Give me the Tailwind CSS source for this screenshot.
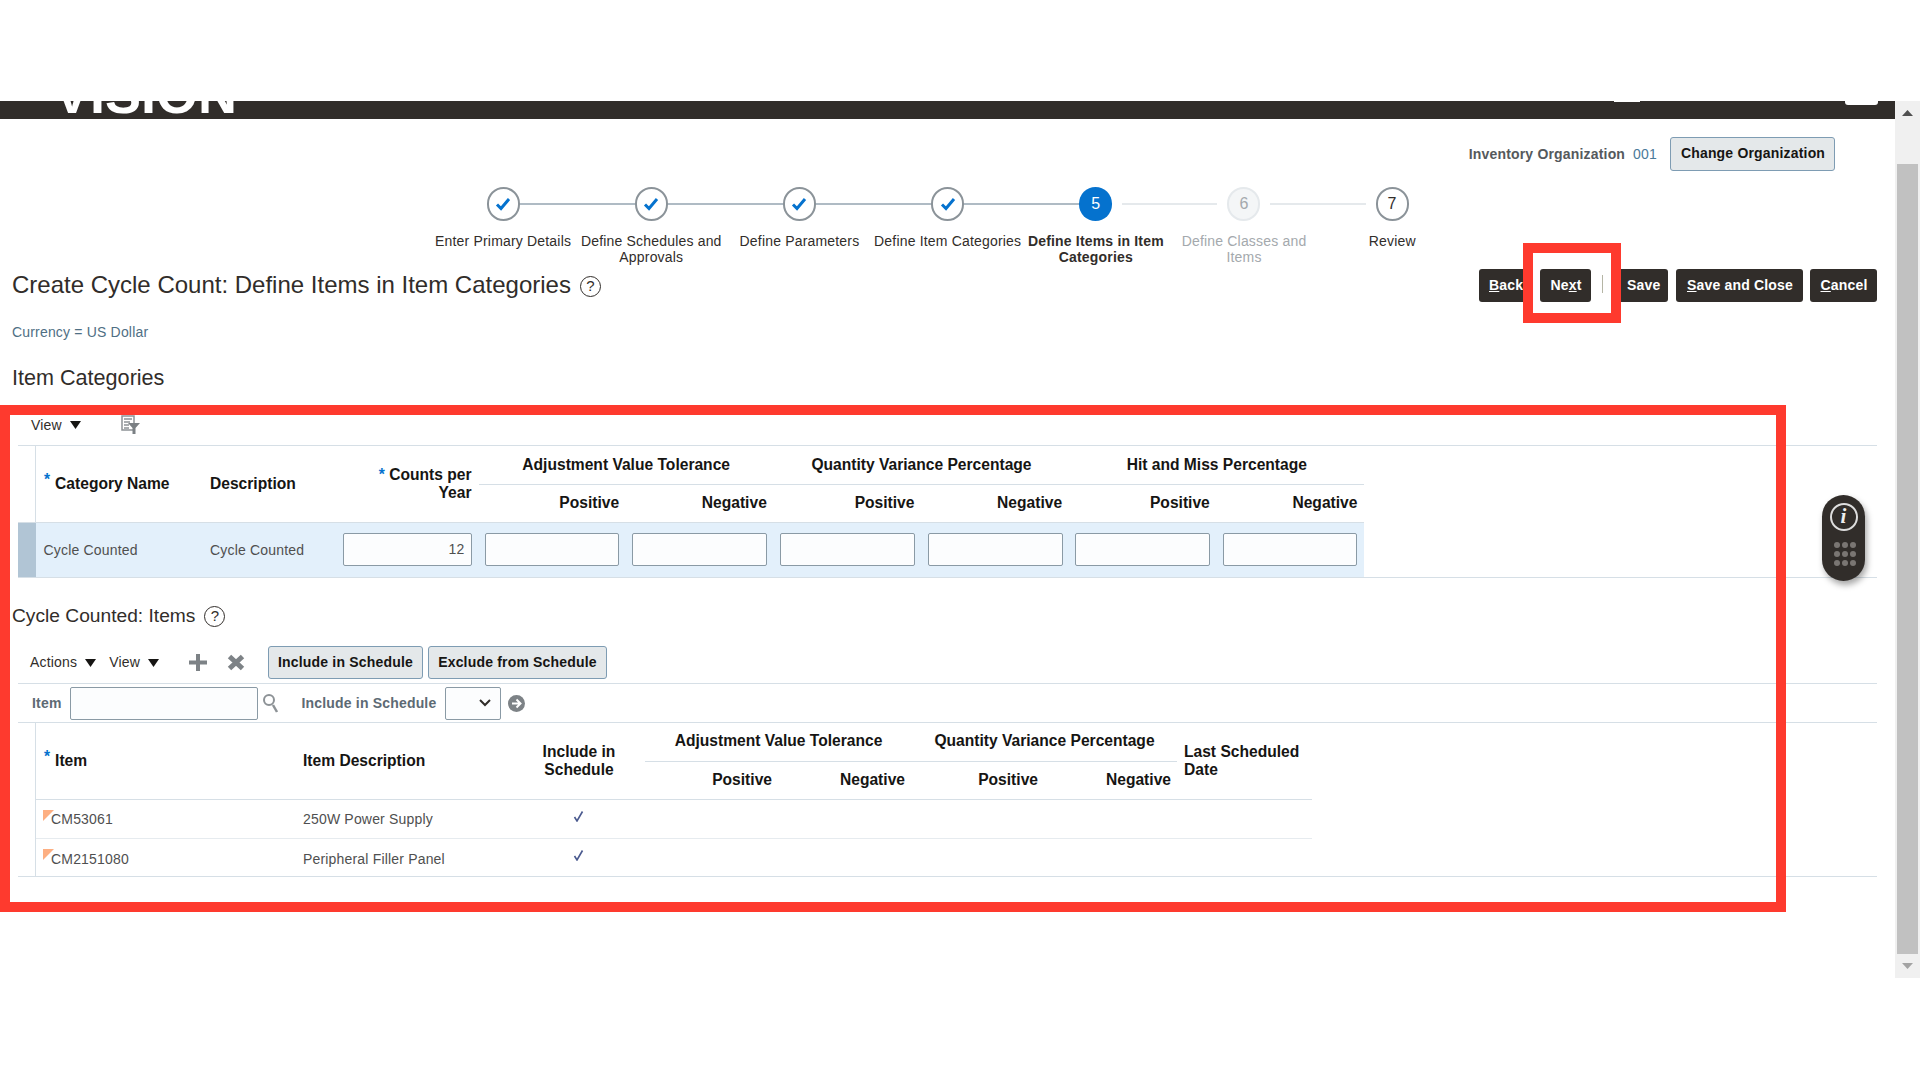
<!DOCTYPE html>
<html lang="en">
<head>
<meta charset="UTF-8">
<title>Create Cycle Count</title>
<script src="https://cdn.jsdelivr.net/npm/@tailwindcss/browser@4"></script>
</head>
<body class="bg-white">
<div class="relative w-[1920px] h-[1080px] overflow-hidden font-['Liberation_Sans',Arial,sans-serif] text-[14px] tracking-[0.18px] text-[#312d2a]">
    <div class="h-[101px]"></div>
    <div class="flex h-[877px]">
        <div class="w-[1895px]">
            <!-- brand bar, cut off at the top -->
            <div class="relative h-[18px] bg-[#312d2a] overflow-hidden">
                <div class="absolute left-[54px] -bottom-[2px] text-[54px] leading-[54px] tracking-normal font-bold text-white">VISION</div>
                <div class="absolute left-[1614px] top-0 w-[26px] h-[1px] bg-white"></div>
                <div class="absolute left-[1845px] top-0 w-[33px] h-[4px] bg-white rounded-b-[3px]"></div>
            </div>

            <!-- organization -->
            <div class="flex justify-end items-center h-[34px] mt-[18px] pr-[60px]">
                <span class="font-bold text-[#55595c]">Inventory Organization</span>
                <span class="ml-[8px] text-[#4a7a99]">001</span>
                <button class="ml-[13px] h-[34px] w-[165px] pl-[1px] rounded-[3px] border border-[#7e9cb3] bg-[#e4e8ea] font-bold text-[#161513] pb-[1px]">Change Organization</button>
            </div>

            <!-- train -->
            <div class="flex items-center h-[34px] mt-[16px] pl-[486.5px]">
                <div class="flex items-center justify-center w-[33px] h-[34px] rounded-full border-2 border-[#8b9399] bg-white">
                    <svg width="16" height="14" viewBox="0 0 16 14"><path d="M2 7.500l4 4L14 2" fill="none" stroke="#0572ce" stroke-width="3"/></svg>
                </div>
                <div class="w-[115.2px] h-[2px] bg-[#afbbc4]"></div>
                <div class="flex items-center justify-center w-[33px] h-[34px] rounded-full border-2 border-[#8b9399] bg-white">
                    <svg width="16" height="14" viewBox="0 0 16 14"><path d="M2 7.500l4 4L14 2" fill="none" stroke="#0572ce" stroke-width="3"/></svg>
                </div>
                <div class="w-[115.2px] h-[2px] bg-[#afbbc4]"></div>
                <div class="flex items-center justify-center w-[33px] h-[34px] rounded-full border-2 border-[#8b9399] bg-white">
                    <svg width="16" height="14" viewBox="0 0 16 14"><path d="M2 7.500l4 4L14 2" fill="none" stroke="#0572ce" stroke-width="3"/></svg>
                </div>
                <div class="w-[115.2px] h-[2px] bg-[#afbbc4]"></div>
                <div class="flex items-center justify-center w-[33px] h-[34px] rounded-full border-2 border-[#8b9399] bg-white">
                    <svg width="16" height="14" viewBox="0 0 16 14"><path d="M2 7.500l4 4L14 2" fill="none" stroke="#0572ce" stroke-width="3"/></svg>
                </div>
                <div class="w-[115.2px] h-[2px] bg-[#afbbc4]"></div>
                <div class="flex items-center justify-center w-[33px] h-[34px] rounded-full bg-[#0572ce] text-white text-[16px]">5</div>
                <div class="w-[95.2px] h-[2px] mx-[10px] bg-[#e5e9ec]"></div>
                <div class="flex items-center justify-center w-[33px] h-[34px] rounded-full border-2 border-[#e5e9ec] bg-[#f4f6f7] text-[#a4a9ad] text-[16px]">6</div>
                <div class="w-[95.2px] h-[2px] mx-[10px] bg-[#e5e9ec]"></div>
                <div class="flex items-center justify-center w-[33px] h-[34px] rounded-full border-2 border-[#8b9399] bg-white text-[16px]">7</div>
            </div>
            <div class="flex mt-[12px] pl-[429px] h-[32px] text-center leading-[16px]">
                <div class="w-[148.2px]">Enter Primary Details</div>
                <div class="w-[148.2px]">Define Schedules and<br>Approvals</div>
                <div class="w-[148.2px]">Define Parameters</div>
                <div class="w-[148.2px] whitespace-nowrap">Define Item Categories</div>
                <div class="w-[148.2px] font-bold">Define Items in Item<br>Categories</div>
                <div class="w-[148.2px] text-[#a4a9ad]">Define Classes and<br>Items</div>
                <div class="w-[148.2px]">Review</div>
            </div>

            <!-- title and page buttons -->
            <div class="flex items-center justify-between h-[33px] mt-[4px] pl-[12px] pr-[18px]">
                <div class="flex items-center">
                    <h1 class="text-[24px] leading-[33px] tracking-normal pb-[1px] -mt-[1px]">Create Cycle Count: Define Items in Item Categories</h1>
                    <span class="flex items-center justify-center ml-[9px] mt-[1px] w-[21px] h-[21px] rounded-full border-[1.5px] border-[#312d2a] text-[15px]">?</span>
                </div>
                <div class="flex items-center font-bold text-white">
                    <button class="w-[56px] h-[33px] pl-[10px] text-left rounded-[3px] bg-[#312d2a]"><u>B</u>ack</button>
                    <button class="relative z-20 ml-[5px] w-[51px] h-[33px] pl-[1px] rounded-[3px] bg-[#312d2a]">Ne<u>x</u>t</button>
                    <span class="relative z-20 ml-[11px] w-[1px] h-[18px] bg-[#b5b5a5] -mt-[4px]"></span>
                    <button class="ml-[14px] w-[51px] h-[33px] pl-[10px] text-left rounded-[3px] bg-[#312d2a]">Save</button>
                    <button class="ml-[8px] w-[127px] h-[33px] pl-[1px] rounded-[3px] bg-[#312d2a]"><u>S</u>ave and Close</button>
                    <button class="ml-[7px] w-[67px] h-[33px] pl-[1px] rounded-[3px] bg-[#312d2a]"><u>C</u>ancel</button>
                </div>
            </div>

            <div class="mt-[20px] pl-[12px] h-[20px] leading-[20px] text-[#4f6f84]">Currency = US Dollar</div>
            <h2 class="mt-[22px] pl-[12px] h-[28px] leading-[28px] text-[21.6px] tracking-normal">Item Categories</h2>

            <!-- item categories table -->
            <div class="ml-[18px] mr-[18px] mt-[23px]">
                <div class="flex items-center h-[31px] border-b border-[#d6dfe6]">
                    <span class="ml-[13px] -mt-[10px]">View</span>
                    <svg class="ml-[8px] -mt-[10px]" width="11" height="8" viewBox="0 0 11 8"><path d="M0 0h11L5.500 8z" fill="#161513"/></svg>
                    <svg class="ml-[40px] -mt-[12px]" width="20" height="19" viewBox="0 0 20 19">
                        <path d="M1 1h12v14H1z" fill="none" stroke="#8d9296" stroke-width="1.500"/>
                        <path d="M3 4h8M3 7h6M3 10h5M3 13h5" stroke="#8d9296" stroke-width="1.500"/>
                        <path d="M7 8h12l-4.500 5v6h-3v-6z" fill="#7b8084"/>
                    </svg>
                </div>
                <div class="grid grid-cols-[18px_167px_134px_141.500px_repeat(6,147.670px)] grid-rows-[39px_38px_54px] border-b border-[#d6dfe6]">
                    <div class="row-span-2 border-r border-[#d6dfe6] border-b"></div>
                    <div class="row-span-2 flex items-center pl-[8px] font-bold text-[15.6px] tracking-normal text-[#161513] border-b border-[#d6dfe6]"><span class="text-[#0572ce] mr-[5px] -mt-[8px]">*</span>Category Name</div>
                    <div class="row-span-2 flex items-center pl-[7px] font-bold text-[15.6px] tracking-normal text-[#161513] border-b border-[#d6dfe6]">Description</div>
                    <div class="row-span-2 flex items-center justify-end pr-[7px] pb-[1px] text-right font-bold text-[15.6px] tracking-normal leading-[18px] text-[#161513] border-b border-[#d6dfe6]"><span><span class="text-[#0572ce] font-bold align-top">*</span> Counts per<br>Year</span></div>
                    <div class="col-span-2 flex items-center justify-center font-bold text-[15.6px] tracking-normal text-[#161513] border-b border-[#d6dfe6]">Adjustment Value Tolerance</div>
                    <div class="col-span-2 flex items-center justify-center font-bold text-[15.6px] tracking-normal text-[#161513] border-b border-[#d6dfe6]">Quantity Variance Percentage</div>
                    <div class="col-span-2 flex items-center justify-center font-bold text-[15.6px] tracking-normal text-[#161513] border-b border-[#d6dfe6]">Hit and Miss Percentage</div>
                    <div class="flex items-center justify-end pr-[7px] pb-[1px] font-bold text-[15.6px] tracking-normal text-[#161513] border-b border-[#d6dfe6]">Positive</div>
                    <div class="flex items-center justify-end pr-[7px] pb-[1px] font-bold text-[15.6px] tracking-normal text-[#161513] border-b border-[#d6dfe6]">Negative</div>
                    <div class="flex items-center justify-end pr-[7px] pb-[1px] font-bold text-[15.6px] tracking-normal text-[#161513] border-b border-[#d6dfe6]">Positive</div>
                    <div class="flex items-center justify-end pr-[7px] pb-[1px] font-bold text-[15.6px] tracking-normal text-[#161513] border-b border-[#d6dfe6]">Negative</div>
                    <div class="flex items-center justify-end pr-[7px] pb-[1px] font-bold text-[15.6px] tracking-normal text-[#161513] border-b border-[#d6dfe6]">Positive</div>
                    <div class="flex items-center justify-end pr-[7px] pb-[1px] font-bold text-[15.6px] tracking-normal text-[#161513] border-b border-[#d6dfe6]">Negative</div>

                    <div class="bg-[#b1c5d5]"></div>
                    <div class="flex items-center pl-[7.500px] bg-[#e3f0fb] text-[#4f4f4f]">Cycle Counted</div>
                    <div class="flex items-center pl-[7px] bg-[#e3f0fb] text-[#4f4f4f]">Cycle Counted</div>
                    <div class="flex items-center pl-[6px] pr-[7px] pb-[1px] bg-[#e3f0fb]"><div class="w-full h-[33px] rounded-[2px] border border-[#8a9aa5] bg-[#fcfdfe] text-right pr-[6px] leading-[31px] text-[#4f4f4f]">12</div></div>
                    <div class="flex items-center pl-[6px] pr-[7px] pb-[1px] bg-[#e3f0fb]"><input class="w-full h-[33px] rounded-[2px] border border-[#8a9aa5] bg-[#fcfdfe]"></div>
                    <div class="flex items-center pl-[6px] pr-[7px] pb-[1px] bg-[#e3f0fb]"><input class="w-full h-[33px] rounded-[2px] border border-[#8a9aa5] bg-[#fcfdfe]"></div>
                    <div class="flex items-center pl-[6.500px] pr-[6.500px] pb-[1px] bg-[#e3f0fb]"><input class="w-full h-[33px] rounded-[2px] border border-[#8a9aa5] bg-[#fcfdfe]"></div>
                    <div class="flex items-center pl-[6.500px] pr-[6.500px] pb-[1px] bg-[#e3f0fb]"><input class="w-full h-[33px] rounded-[2px] border border-[#8a9aa5] bg-[#fcfdfe]"></div>
                    <div class="flex items-center pl-[6px] pr-[7px] pb-[1px] bg-[#e3f0fb]"><input class="w-full h-[33px] rounded-[2px] border border-[#8a9aa5] bg-[#fcfdfe]"></div>
                    <div class="flex items-center pl-[6px] pr-[7px] pb-[1px] bg-[#e3f0fb]"><input class="w-full h-[33px] rounded-[2px] border border-[#8a9aa5] bg-[#fcfdfe]"></div>
                </div>
            </div>

            <!-- items -->
            <div class="flex items-center mt-[26px] pl-[12px] h-[24px]">
                <h2 class="text-[19.2px] tracking-normal">Cycle Counted: Items</h2>
                <span class="flex items-center justify-center ml-[9px] w-[21px] h-[21px] rounded-full border-[1.5px] border-[#312d2a] text-[15px]">?</span>
            </div>
            <div class="ml-[18px] mr-[18px] mt-[18px]">
                <div class="flex items-start h-[38px] border-b border-[#d6dfe6]">
                    <div class="flex items-center h-[33px]">
                        <span class="ml-[12px]">Actions</span>
                        <svg class="ml-[8px]" width="11" height="8" viewBox="0 0 11 8"><path d="M0 0h11L5.500 8z" fill="#161513"/></svg>
                        <span class="ml-[13px]">View</span>
                        <svg class="ml-[8px]" width="11" height="8" viewBox="0 0 11 8"><path d="M0 0h11L5.500 8z" fill="#161513"/></svg>
                        <svg class="ml-[30px]" width="18" height="17" viewBox="0 0 18 17"><path d="M7 0h4v6.500h7v4h-7V17H7v-6.500H0v-4h7z" fill="#7d8286"/></svg>
                        <svg class="ml-[20px]" width="18" height="17" viewBox="0 0 18 17"><path d="M2.500 2.500l13 12M15.500 2.500l-13 12" fill="none" stroke="#7d8286" stroke-width="5"/></svg>
                        <button class="ml-[23px] w-[155px] h-[33px] rounded-[3px] border border-[#7e9cb3] bg-[#e4e8ea] font-bold text-[#161513]">Include in Schedule</button>
                        <button class="ml-[5px] w-[179px] h-[33px] rounded-[3px] border border-[#7e9cb3] bg-[#e4e8ea] font-bold text-[#161513]">Exclude from Schedule</button>
                    </div>
                </div>
                <div class="flex items-center h-[39px] border-b border-[#d6dfe6]">
                    <span class="ml-[14px] font-bold text-[#5d6a74]">Item</span>
                    <input class="ml-[8px] w-[188px] h-[33px] rounded-[2px] border border-[#8a9aa5] bg-[#fcfdfe]">
                    <svg class="ml-[5px]" width="16" height="20" viewBox="0 0 16 20"><circle cx="6" cy="7" r="5" fill="none" stroke="#8d9296" stroke-width="2"/><path d="M10 12l4 7" stroke="#8d9296" stroke-width="2.500"/></svg>
                    <span class="ml-[23px] font-bold text-[#5d6a74]">Include in Schedule</span>
                    <div class="flex items-center justify-end ml-[9px] w-[56px] h-[33px] pr-[9px] rounded-[2px] border border-[#8a9aa5] bg-[#fcfdfe]">
                        <svg width="12" height="8" viewBox="0 0 12 8"><path d="M1 1l5 5 5-5" fill="none" stroke="#312d2a" stroke-width="2"/></svg>
                    </div>
                    <svg class="ml-[7px]" width="17" height="17" viewBox="0 0 17 17"><circle cx="8.500" cy="8.500" r="8.500" fill="#7d8286"/><path d="M4 8.500h8M8.500 4.500l4 4-4 4" fill="none" stroke="#fff" stroke-width="2"/></svg>
                </div>
                <div class="border-b border-[#d6dfe6]">
                    <div class="grid grid-cols-[18px_259px_216px_134px_133px_134px_133px_132px_135px] grid-rows-[39px_38px_39px_37px] w-[1294px]">
                        <div class="row-span-4 border-r border-[#d6dfe6]"></div>
                        <div class="row-span-2 flex items-center pl-[8px] font-bold text-[15.6px] tracking-normal text-[#161513] border-b border-[#d6dfe6]"><span class="text-[#0572ce] mr-[5px] -mt-[8px]">*</span>Item</div>
                        <div class="row-span-2 flex items-center pl-[8px] font-bold text-[15.6px] tracking-normal text-[#161513] border-b border-[#d6dfe6]">Item Description</div>
                        <div class="row-span-2 flex items-center justify-center pl-[2px] text-center font-bold text-[15.6px] tracking-normal leading-[18px] text-[#161513] border-b border-[#d6dfe6]">Include in<br>Schedule</div>
                        <div class="col-span-2 flex items-center justify-center pb-[2px] font-bold text-[15.6px] tracking-normal text-[#161513] border-b border-[#d6dfe6]">Adjustment Value Tolerance</div>
                        <div class="col-span-2 flex items-center justify-center pb-[2px] font-bold text-[15.6px] tracking-normal text-[#161513] border-b border-[#d6dfe6]">Quantity Variance Percentage</div>
                        <div class="row-span-2 flex items-center pl-[7px] font-bold text-[15.6px] tracking-normal leading-[18px] text-[#161513] border-b border-[#d6dfe6]">Last Scheduled<br>Date</div>
                        <div class="flex items-center justify-end pr-[6px] pb-[2px] font-bold text-[15.6px] tracking-normal text-[#161513] border-b border-[#d6dfe6]">Positive</div>
                        <div class="flex items-center justify-end pr-[7px] pb-[2px] font-bold text-[15.6px] tracking-normal text-[#161513] border-b border-[#d6dfe6]">Negative</div>
                        <div class="flex items-center justify-end pr-[7px] pb-[2px] font-bold text-[15.6px] tracking-normal text-[#161513] border-b border-[#d6dfe6]">Positive</div>
                        <div class="flex items-center justify-end pr-[6px] pb-[2px] font-bold text-[15.6px] tracking-normal text-[#161513] border-b border-[#d6dfe6]">Negative</div>

                        <div class="relative flex items-center pl-[15px] pt-[1px] text-[#4f4f4f] border-b border-[#e6ebef]"><span class="absolute left-[7px] top-[10px] w-[11px] h-[11px] bg-[#fdaf82] [clip-path:polygon(0_0,100%_0,0_100%)]"></span>CM53061</div>
                        <div class="flex items-center pl-[8px] pt-[1px] text-[#4f4f4f] border-b border-[#e6ebef]">250W Power Supply</div>
                        <div class="flex items-center justify-center pl-[1px] pb-[5px] border-b border-[#e6ebef]"><svg width="11" height="11" viewBox="0 0 11 11"><path d="M1.500 6l2.500 4L9.500 0.500" fill="none" stroke="#4a5a8f" stroke-width="1.600"/></svg></div>
                        <div class="col-span-5 border-b border-[#e6ebef]"></div>

                        <div class="relative flex items-center pl-[15px] pt-[3px] text-[#4f4f4f]"><span class="absolute left-[7px] top-[10px] w-[11px] h-[11px] bg-[#fdaf82] [clip-path:polygon(0_0,100%_0,0_100%)]"></span>CM2151080</div>
                        <div class="flex items-center pl-[8px] pt-[3px] text-[#4f4f4f]">Peripheral Filler Panel</div>
                        <div class="flex items-center justify-center pl-[1px] pb-[4px]"><svg width="11" height="11" viewBox="0 0 11 11"><path d="M1.500 6l2.500 4L9.500 0.500" fill="none" stroke="#4a5a8f" stroke-width="1.600"/></svg></div>
                        <div class="col-span-5"></div>
                    </div>
                </div>
            </div>
        </div>

        <!-- scrollbar -->
        <div class="flex flex-col items-center w-[25px] bg-[#f0f0f0]">
            <div class="flex items-center justify-center h-[63px] w-full pb-[40px]">
                <svg width="11" height="6" viewBox="0 0 11 6"><path d="M5.500 0L11 6H0z" fill="#505050"/></svg>
            </div>
            <div class="w-[21px] flex-1 bg-[#c1c1c1]"></div>
            <div class="flex items-center justify-center h-[24px] w-full">
                <svg width="11" height="6" viewBox="0 0 11 6"><path d="M0 0h11L5.500 6z" fill="#a3a3a3"/></svg>
            </div>
        </div>
    </div>

    <!-- annotation frames -->
    <div class="absolute z-10 left-[1523px] top-[243px] w-[98px] h-[80px] border-[10px] border-[#fe3a2e] bg-white"></div>
    <div class="absolute z-10 left-0 top-[405px] w-[1786px] h-[507px] border-[10px] border-[#fe3a2e]"></div>

    <!-- floating info pill -->
    <div class="absolute z-10 left-[1822px] top-[495px] flex flex-col items-center w-[43px] h-[86px] rounded-full bg-[#312d2a] shadow-[2px_4px_6px_rgba(0,0,0,0.35)]">
        <div class="flex items-center justify-center mt-[8px] w-[28px] h-[28px] rounded-full border-2 border-[#ddd] text-[#eee] italic font-['Liberation_Serif',serif] font-bold text-[21px]">i</div>
        <div class="grid grid-cols-3 gap-x-[2px] gap-y-[3px] mt-[11px] ml-[2px]">
            <span class="w-[6px] h-[6px] rounded-full bg-[#7a7673]"></span>
            <span class="w-[6px] h-[6px] rounded-full bg-[#7a7673]"></span>
            <span class="w-[6px] h-[6px] rounded-full bg-[#7a7673]"></span>
            <span class="w-[6px] h-[6px] rounded-full bg-[#7a7673]"></span>
            <span class="w-[6px] h-[6px] rounded-full bg-[#7a7673]"></span>
            <span class="w-[6px] h-[6px] rounded-full bg-[#7a7673]"></span>
            <span class="w-[6px] h-[6px] rounded-full bg-[#7a7673]"></span>
            <span class="w-[6px] h-[6px] rounded-full bg-[#7a7673]"></span>
            <span class="w-[6px] h-[6px] rounded-full bg-[#7a7673]"></span>
        </div>
    </div>
</div>
</body>
</html>
